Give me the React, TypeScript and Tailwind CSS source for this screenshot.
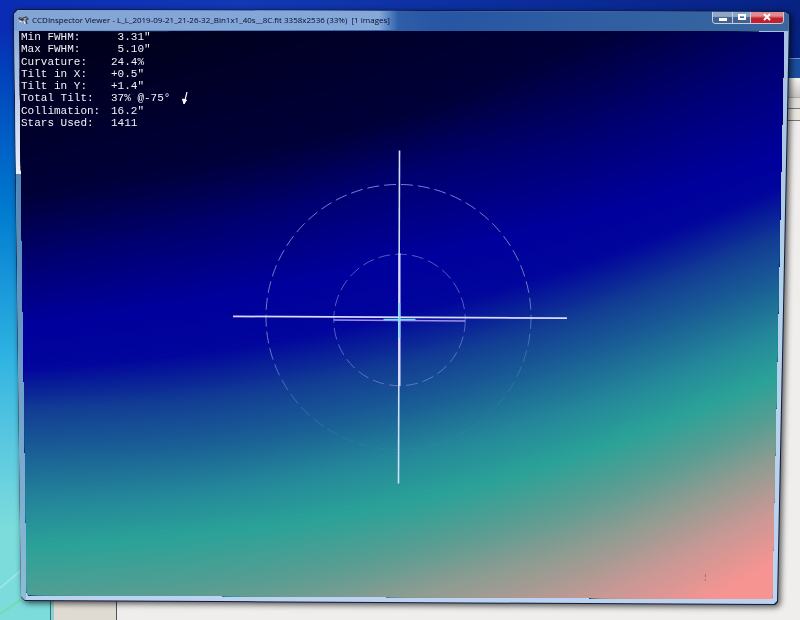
interface Stop {
    color: number[]
    ys: number[]
}

const Desktop: React.FC = () => (
    <div className="absolute inset-0">
        {/* ::Wallpaper streaks */}
        <svg className="absolute bottom-0 left-0 h-28 w-14" viewBox="0 0 56 112" fill="none">
            <path d="M0 80L24 60" stroke="#b5f0ee" strokeWidth="2" opacity=".5" />
            <path d="M0 106L28 87" stroke="#72d88c" strokeWidth="2" opacity=".6" />
        </svg>

        {/* ::Window behind */}
        <div className="absolute top-[58px] right-0 bottom-0 left-[50px] flex flex-col border-l border-[#2b7776] bg-[#efeeed]">
            <div className="h-5 border-t border-[#6d9bdc] bg-[#1b4f9f]" />
            <div className="h-5 border-b border-[#aaa] bg-linear-to-b from-[#f8f6f3] to-[#c8c5c2]" />
            <div className="h-[11px] border-b border-[#777] bg-[#e3e0dc]" />
            <div className="h-3 border-b border-[#777] bg-[#e9e6e0]" />
            <div className="flex flex-1">
                <div className="w-[66px] border-r border-l-3 border-r-[#555] border-l-[#8fd0cf] bg-[#dfdad2]" />
            </div>
        </div>
    </div>
)

const TitleBar: React.FC = () => (
    <header className="flex h-[21px] items-start bg-linear-to-r from-[#7ba0d6] from-0% via-[#2656a4] via-55% to-[#3a679f] pr-[5px] pl-[3px]">
        <div className="flex h-5 items-center gap-[3px] bg-linear-to-r from-[#83a5d6] via-[#84a8da] via-95% to-[#2f60ac] pr-2">
            <svg className="h-3 w-3" viewBox="0 0 12 12" fill="none">
                <path d="M1 4L4 3L7 5L6 7L3 6Z" fill="#3a3438" />
                <path d="M6 4L9 3L11 5L9 6L10 10" stroke="#4c4243" strokeWidth="1.3" />
                <path d="M2 7L5 8M7 7L8 10" stroke="#eceaf0" strokeWidth="1" />
                <circle cx="4" cy="4" r="1" fill="#b76f50" />
            </svg>
            <h1 className="text-[8px] leading-4 font-medium whitespace-pre text-[#060c28]">{strings.title}</h1>
        </div>
        <div className="mt-px ml-auto flex h-[13px] overflow-hidden rounded-b border border-t-0 border-[#c3cee5]">
            <button aria-label="Minimize" className="flex w-5 items-center justify-center border-r border-[#c3cee5] bg-linear-to-b from-[#8fa6cb] from-45% to-[#43628f] to-55%">
                <span className="mt-1 h-[3px] w-2 bg-white" />
            </button>
            <button aria-label="Maximize" className="flex w-[18px] items-center justify-center border-r border-[#c3cee5] bg-linear-to-b from-[#8fa6cb] from-45% to-[#43628f] to-55%">
                <span className="h-[6px] w-2 border-2 border-white" />
            </button>
            <button aria-label="Close" className="flex w-8 items-center justify-center bg-linear-to-b from-[#e08b91] from-40% to-[#c3202e] to-60%">
                <svg className="h-2 w-2" viewBox="0 0 8 8" stroke="#fff" strokeWidth="2">
                    <path d="M1 1L7 7M7 1L1 7" />
                </svg>
            </button>
        </div>
    </header>
)

const Readout: React.FC = () => (
    <dl className="relative grid h-[98px] w-[171px] grid-cols-[90px_1fr] items-center pl-[2px] font-['Liberation_Mono',monospace] text-[11px] leading-3 whitespace-pre text-[#f2f2f8]">
        {
            strings.stats.map(stat => (
                <div key={stat.label} className="contents">
                    <dt>{stat.label}</dt>
                    <dd className="flex items-center justify-between">
                        {stat.value}
                        {stat.arrow && (
                            <svg className="h-3 w-2" viewBox="0 0 8 12" fill="#fff" stroke="#fff">
                                <path d="M5 0L3 8" strokeWidth="1.2" />
                                <path d="M0.500 7L4.500 8L2 12Z" />
                            </svg>
                        )}
                    </dd>
                </div>
            ))
        }
    </dl>
)

// smooth open curve through the five sampled columns, closed along the bottom
const contour = (ys: number[]) => {
    const pts = ys.map((y, i) => [i * 190 + 20, y])
    let d = `M${pts[0][0]} ${pts[0][1]}`
    for (let i = 0; i < pts.length - 1; i++) {
        const a = pts[i - 1] || pts[i]
        const b = pts[i]
        const c = pts[i + 1]
        const e = pts[i + 2] || c
        d += `C${b[0] + (c[0] - a[0]) / 6} ${b[1] + (c[1] - a[1]) / 6} ${c[0] - (e[0] - b[0]) / 6} ${c[1] - (e[1] - b[1]) / 6} ${c[0]} ${c[1]}`
    }
    return d + 'H800V900H0V' + pts[0][1] + 'Z'
}

const STEPS = 18

const mix = (a: number[], b: number[], t: number) => a.map((v, i) => v + (b[i] - v) * t)

const HeatMap: React.FC = () => (
    <svg className="absolute inset-0 h-full w-full" viewBox="18 30 766 570" preserveAspectRatio="none">
        <rect x="0" y="0" width="800" height="620" fill="#00001c" />
        {
            stops.slice(1).map((stop, i) => (
                Array.from({ length: STEPS }, (_, k) => {
                    const t = (k + 1) / STEPS
                    const color = mix(stops[i].color, stop.color, t).map(Math.round)
                    return <path key={`${i}-${k}`} d={contour(mix(stops[i].ys, stop.ys, t))} fill={`rgb(${color.join(',')})`} />
                })
            ))
        }
    </svg>
)

const Reticle: React.FC = () => (
    <svg className="absolute inset-0 h-full w-full" viewBox="18 30 766 570" fill="none">
        <defs>
            <linearGradient id="ring" x1="0" y1="0" x2="0.2" y2="1">
                <stop offset="0" stopColor="#7c7cd0" />
                <stop offset=".6" stopColor="#667bc8" />
                <stop offset=".85" stopColor="#4f8fb8" stopOpacity=".5" />
                <stop offset="1" stopColor="#3f9ba8" stopOpacity="0.2" />
            </linearGradient>
        </defs>
        <circle cx="398" cy="317" r="133" stroke="url(#ring)" strokeDasharray="12 5" />
        <circle cx="399" cy="320" r="66" stroke="#8b96dd" strokeOpacity=".6" strokeDasharray="12 5" />
        <path d="M333 320L465 321" stroke="#9d92e6" strokeWidth="1.3" />
        <path d="M232 316.4L567 318.2" stroke="#dcd9fb" strokeWidth="1.7" />
        <path d="M399 150L398 484" stroke="#cfe0fa" strokeWidth="1.6" />
        <path d="M399 253V386" stroke="#e4dcff" strokeWidth="2" />
        <path d="M383 319.5H415M399 303V338" stroke="#6fe0f5" strokeWidth="1.5" />
        <path d="M706 575V578M706 580V582" stroke="#a76f70" />
    </svg>
)

const App: React.FC = () => (
    <main className="relative flex min-h-screen flex-col overflow-hidden bg-linear-to-b from-[#0a2cb4] from-5% via-[#2fb4e2] via-58% to-[#7cdcdc] to-85% pt-[9px] pr-[10px] pb-[15px] pl-[13px] font-['Open_Sans','Noto_Sans',sans-serif]">
        <div className="absolute inset-x-0 top-0 h-[58px] bg-linear-to-r from-transparent via-[#1238b4] via-30% to-[#062283]" />
        <Desktop />

        {/* :VIEWER WINDOW */}
        <div className="relative flex flex-1 flex-col drop-shadow-[2px_2px_3px_#000000b0]">
            <section className="flex flex-1 flex-col bg-[#101c40] [clip-path:polygon(0_4px,4px_0,calc(100%_-_4px)_2px,100%_6px,calc(100%_-_12px)_calc(100%_-_3px),calc(100%_-_15px)_100%,12px_calc(100%_-_4px),8px_calc(100%_-_8px))]">
                <div className="flex flex-1 flex-col bg-linear-to-b from-[#a8c0e4] from-5% via-[#b4d2ea] via-50% to-[#bdd2ee] p-px [clip-path:polygon(1px_5px,5px_1px,calc(100%_-_5px)_3px,calc(100%_-_1px)_6px,calc(100%_-_13px)_calc(100%_-_4px),calc(100%_-_16px)_calc(100%_-_1px),12px_calc(100%_-_5px),8px_calc(100%_-_9px))]">
                    <TitleBar />
                    <div className="flex flex-1 flex-col bg-[linear-gradient(to_bottom,#8fadd8,#eef0fc_25%,#4f86b8_25%,#8fbcd8)] bg-[length:12px_100%] bg-no-repeat px-[5px] pb-[5px]">
                        <div className="relative flex-1 [clip-path:polygon(0_0,100%_1px,calc(100%_-_12px)_100%,8px_calc(100%_-_4px))]">
                            <HeatMap />
                            <Reticle />
                            <Readout />
                        </div>
                    </div>
                </div>
            </section>
        </div>
    </main>
)

const stops: Stop[] = [
    { color: [0, 0, 28], ys: [60, 10, -60, -150, -250] },
    { color: [0, 0, 58], ys: [195, 160, 115, 40, -50] },
    { color: [0, 0, 112], ys: [260, 225, 175, 130, 45] },
    { color: [0, 0, 156], ys: [325, 297, 258, 215, 155] },
    { color: [2, 6, 156], ys: [368, 350, 314, 260, 188] },
    { color: [18, 62, 148], ys: [410, 398, 365, 312, 237] },
    { color: [27, 100, 150], ys: [458, 448, 415, 360, 287] },
    { color: [36, 136, 154], ys: [505, 490, 456, 405, 330] },
    { color: [43, 162, 152], ys: [548, 533, 504, 450, 374] },
    { color: [90, 157, 146], ys: [605, 590, 553, 497, 418] },
    { color: [145, 156, 146], ys: [675, 650, 600, 545, 458] },
    { color: [200, 152, 148], ys: [770, 730, 668, 600, 506] },
    { color: [246, 148, 146], ys: [860, 820, 755, 665, 558] },
]

const strings = {
    title: "CCDInspector Viewer - L_L_2019-09-21_21-26-32_Bin1x1_40s__8C.fit 3358x2536 (33%)  [1 images]",
    stats: [
        { label: "Min FWHM:", value: " 3.31\"" },
        { label: "Max FWHM:", value: " 5.10\"" },
        { label: "Curvature:", value: "24.4%" },
        { label: "Tilt in X:", value: "+0.5\"" },
        { label: "Tilt in Y:", value: "+1.4\"" },
        { label: "Total Tilt:", value: "37% @-75°", arrow: true },
        { label: "Collimation:", value: "16.2\"" },
        { label: "Stars Used:", value: "1411" },
    ]
}

export default App
